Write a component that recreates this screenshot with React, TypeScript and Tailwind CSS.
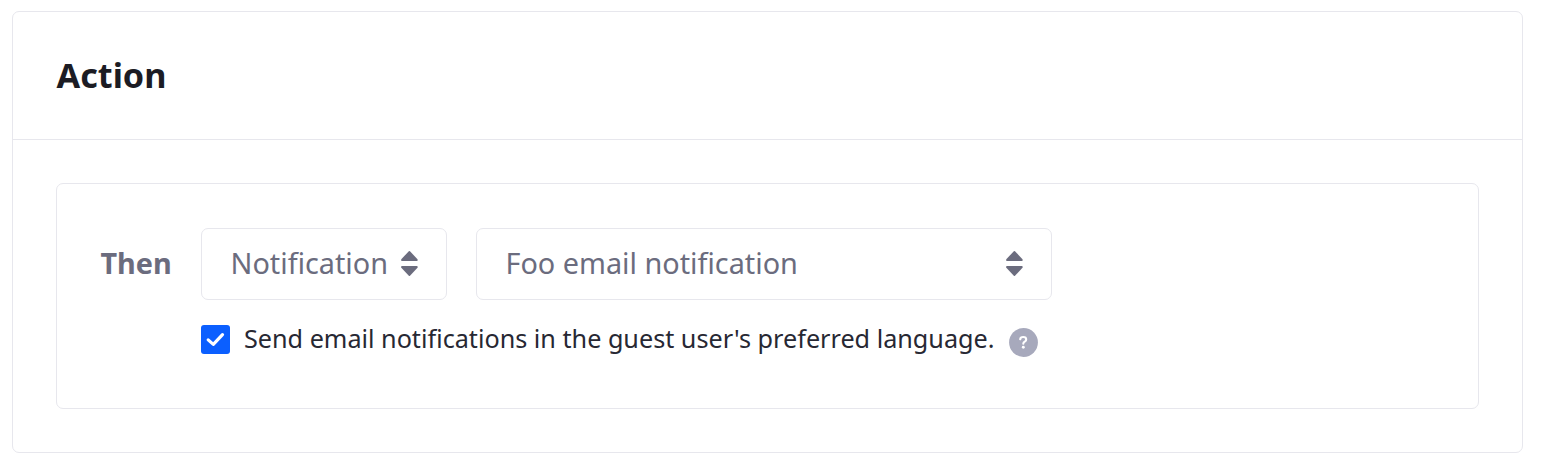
function CaretDouble() {
  return (
    <svg className="h-[26px] w-[18px] shrink-0" viewBox="0 0 18 26" fill="#6b6c7e" aria-hidden="true">
      <path d="M8.8 1.2Q9.4 .7 10 1.2L17.5 9.3Q18 10.8 17 11.1H1.8Q.8 10.8 1.3 9.3Z" />
      <path d="M8.8 25.7Q9.4 26.1 10 25.7L17.5 17.8Q18 16.3 17 16H1.8Q.8 16.3 1.3 17.8Z" />
    </svg>
  );
}

function Select({ label, className }: { label: string; className: string }) {
  return (
    <button
      type="button"
      className={`flex h-[72px] items-center justify-between rounded-[7px] border border-[#e7e7ed] bg-white pr-7 pb-[2px] pl-[28.5px] text-[28.8px] leading-[44px] whitespace-nowrap text-[#6b6c7e] ${className}`}
    >
      <span>{label}</span>
      <CaretDouble />
    </button>
  );
}

export default function App() {
  return (
    <main className="h-[475px] bg-white pt-[11px] pl-3 font-['Noto_Sans',sans-serif]">
      <section className="h-[442px] w-[1511px] rounded-[7px] border border-[#e7e7ed]">
        <header className="flex h-32 items-center border-b border-[#e7e7ed] px-[43.5px] pb-[2px]">
          <h2 className="text-[34.2px] leading-[48px] font-bold text-[#1c1c24]">Action</h2>
        </header>
        <div className="px-[43px] pt-[43px]">
          <div className="flex h-[226px] rounded-[7px] border border-[#e7e7ed] pt-11 pl-[43.5px]">
            <div className="flex h-[72px] w-[100.5px] items-center pb-[2px] text-[28.8px] font-bold text-[#6b6c7e]">Then</div>
            <div>
              <div className="flex gap-[29px]">
                <Select label="Notification" className="w-[246px]" />
                <Select label="Foo email notification" className="w-[576px]" />
              </div>
              <div className="mt-[25px] flex items-start">
                <span
                  role="checkbox"
                  aria-checked="true"
                  aria-label="Send email notifications in the guest user's preferred language."
                  className="size-[29px] rounded-[3px] bg-[#0b5fff]"
                >
                  <svg className="size-[29px]" viewBox="0 0 29 29" fill="none" aria-hidden="true">
                    <path d="M7.2 14.9L12.3 19.4L21.5 9.6" stroke="#fff" strokeWidth="3.2" strokeLinecap="round" strokeLinejoin="round" />
                  </svg>
                </span>
                <span className="ml-[14px] w-[751px] text-[25.2px] leading-[27px] whitespace-nowrap text-[#272833]">
                  Send email notifications in the guest user's preferred language.
                </span>
                <svg className="mt-[3px] ml-[14px] size-[29px]" viewBox="0 0 29 29" fill="none" aria-hidden="true">
                  <circle cx="14.5" cy="14.5" r="14.4" fill="#a7a9bc" />
                  <path d="M11.2 11.3Q11.4 9 14.2 9Q17.2 9 17.2 11.4Q17.2 12.7 15.7 13.7Q14.3 14.6 14.3 15.8" stroke="#fff" strokeWidth="2.1" strokeLinecap="round" />
                  <circle cx="14.3" cy="19.3" r="1.45" fill="#fff" />
                </svg>
              </div>
            </div>
          </div>
        </div>
      </section>
    </main>
  );
}
